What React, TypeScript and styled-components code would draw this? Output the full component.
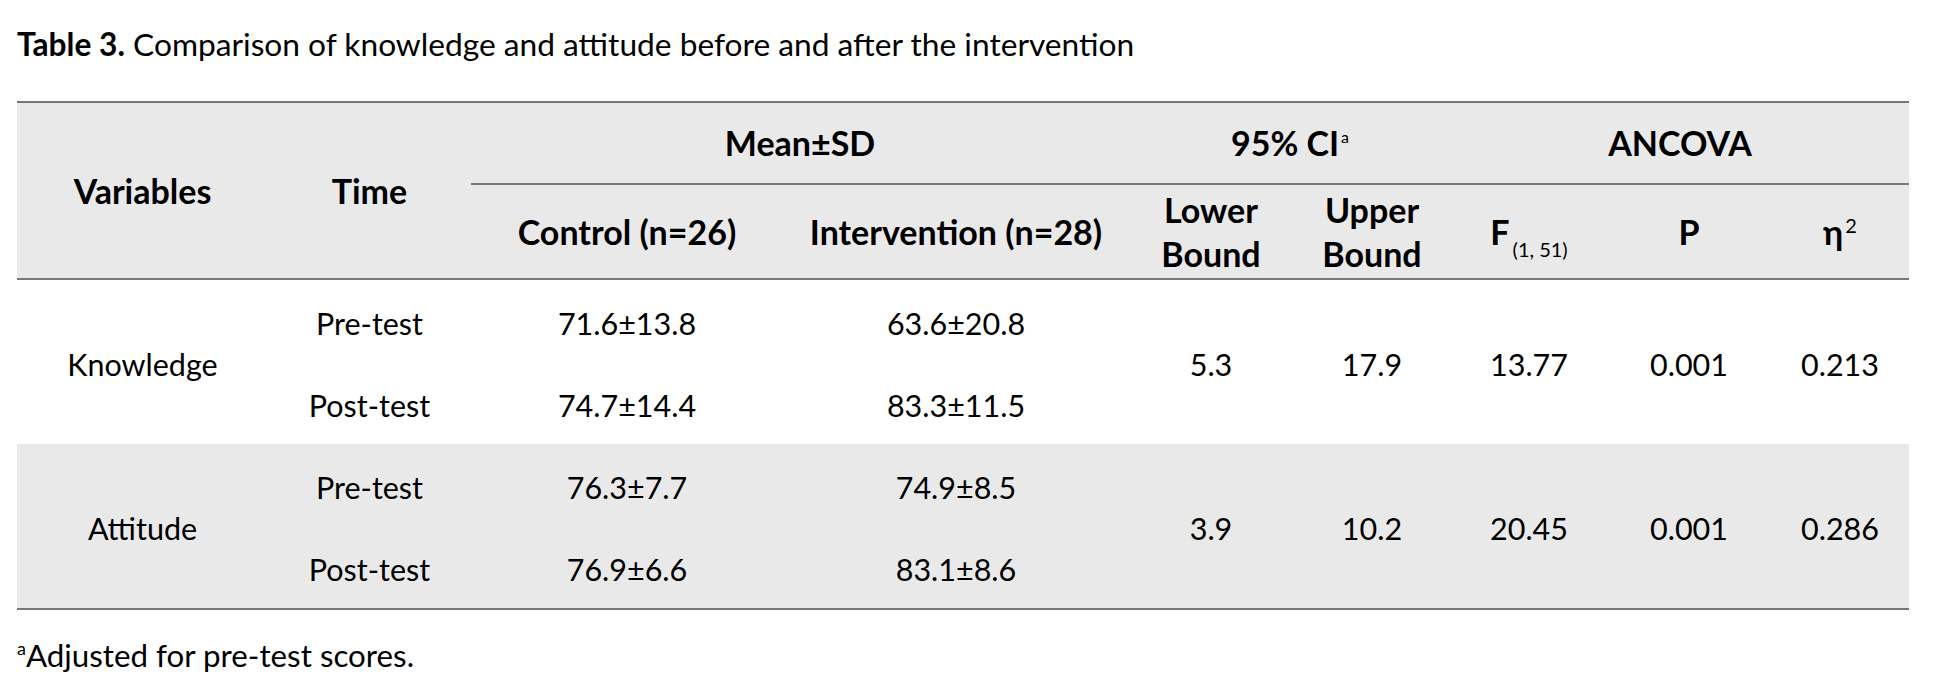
import React from 'react';
import styled, { createGlobalStyle } from 'styled-components';

const GlobalStyle = createGlobalStyle`
  body {
    margin: 0;
    background: #fff;
    color: #000;
    font-family: Lato, "Open Sans", sans-serif;
  }
`;

const columns = '251px 203px 312px 346px 164px 158px 156px 164px 138px';

const rows = [
  {
    variable: 'Knowledge',
    times: [
      { time: 'Pre-test', control: '71.6±13.8', intervention: '63.6±20.8' },
      { time: 'Post-test', control: '74.7±14.4', intervention: '83.3±11.5' },
    ],
    lower: '5.3',
    upper: '17.9',
    f: '13.77',
    p: '0.001',
    eta: '0.213',
  },
  {
    variable: 'Attitude',
    times: [
      { time: 'Pre-test', control: '76.3±7.7', intervention: '74.9±8.5' },
      { time: 'Post-test', control: '76.9±6.6', intervention: '83.1±8.6' },
    ],
    lower: '3.9',
    upper: '10.2',
    f: '20.45',
    p: '0.001',
    eta: '0.286',
  },
];

function App() {
  return (
    <Page>
      <GlobalStyle />
      <Caption>
        <b>Table 3.</b> Comparison of knowledge and attitude before and after the intervention
      </Caption>
      <Table>
        <Head>
          <HeadCell $rows={2}>Variables</HeadCell>
          <HeadCell $rows={2}>Time</HeadCell>
          <HeadCell $span={2} $group>Mean±SD</HeadCell>
          <HeadCell $span={2} $group><span>95% CI<Sup>a</Sup></span></HeadCell>
          <HeadCell $span={3} $group>ANCOVA</HeadCell>
          <HeadCell>Control (n=26)</HeadCell>
          <HeadCell>Intervention (n=28)</HeadCell>
          <HeadCell $stacked>Lower<br />Bound</HeadCell>
          <HeadCell $stacked>Upper<br />Bound</HeadCell>
          <HeadCell><span>F<Sub>(1, 51)</Sub></span></HeadCell>
          <HeadCell>P</HeadCell>
          <HeadCell><span>η<EtaSup>2</EtaSup></span></HeadCell>
        </Head>
        {rows.map((row, i) => (
          <Group key={row.variable} $shaded={i % 2 === 1}>
            <Cell $rows={2}>{row.variable}</Cell>
            {row.times.map(t => (
              <React.Fragment key={t.time}>
                <Cell $col={2}>{t.time}</Cell>
                <Cell $col={3}>{t.control}</Cell>
                <Cell $col={4}>{t.intervention}</Cell>
              </React.Fragment>
            ))}
            <Cell $rows={2} $col={5} $row={1}>{row.lower}</Cell>
            <Cell $rows={2} $col={6} $row={1}>{row.upper}</Cell>
            <Cell $rows={2} $col={7} $row={1}>{row.f}</Cell>
            <Cell $rows={2} $col={8} $row={1}>{row.p}</Cell>
            <Cell $rows={2} $col={9} $row={1}>{row.eta}</Cell>
          </Group>
        ))}
      </Table>
      <Note>
        <NoteSup>a</NoteSup>Adjusted for pre-test scores.
      </Note>
    </Page>
  );
}

export default App;

const Page = styled.div`
  width: 1940px;
  height: 678px;
  padding: 25px 31px 0 17px;
  box-sizing: border-box;
  font-size: 30.5px;
`;

const Caption = styled.div`
  font-size: 31.7px;
  line-height: 38px;
  margin-bottom: 38px;
  white-space: nowrap;

  b {
    font-weight: 700;
  }
`;

const Table = styled.div`
  width: 1892px;
  border-top: 2px solid #777;
  border-bottom: 2px solid #777;
`;

const Head = styled.div`
  display: grid;
  grid-template-columns: ${columns};
  grid-template-rows: 82px 93px;
  background: #e9e9e9;
  border-bottom: 2px solid #777;
  font-size: 34px;
`;

const HeadCell = styled.div<{ $span?: number; $rows?: number; $group?: boolean; $stacked?: boolean }>`
  display: flex;
  align-items: center;
  justify-content: center;
  text-align: center;
  font-weight: 700;
  white-space: nowrap;
  grid-column: span ${p => p.$span || 1};
  grid-row: span ${p => p.$rows || 1};
  border-bottom: ${p => (p.$group ? '2px solid #777' : 'none')};
  line-height: ${p => (p.$stacked ? '44px' : '36px')};
`;

const Group = styled.div<{ $shaded?: boolean }>`
  display: grid;
  grid-template-columns: ${columns};
  grid-template-rows: 82px 82px;
  background: ${p => (p.$shaded ? '#e9e9e9' : '#fff')};
`;

const Cell = styled.div<{ $rows?: number; $col?: number; $row?: number }>`
  display: flex;
  align-items: center;
  justify-content: center;
  white-space: nowrap;
  line-height: 36px;
  padding-top: 3px;
  grid-column: ${p => p.$col || 'auto'};
  grid-row: ${p => (p.$row ? `${p.$row} / span ${p.$rows || 1}` : `span ${p.$rows || 1}`)};
`;

const Sup = styled.sup`
  font-size: 16px;
  font-weight: 400;
  vertical-align: 13px;
  line-height: 0;
  margin-left: 2px;
`;

const Sub = styled.sub`
  font-size: 20px;
  font-weight: 400;
  vertical-align: -12px;
  line-height: 0;
  margin-left: 3px;
`;

const EtaSup = styled.sup`
  font-size: 20px;
  font-weight: 400;
  vertical-align: 12px;
  line-height: 0;
  margin-left: 2px;
`;

const Note = styled.div`
  margin-top: 27px;
  font-size: 31.3px;
  line-height: 36px;
`;

const NoteSup = styled.sup`
  font-size: 18px;
  vertical-align: 12px;
  line-height: 0;
`;
